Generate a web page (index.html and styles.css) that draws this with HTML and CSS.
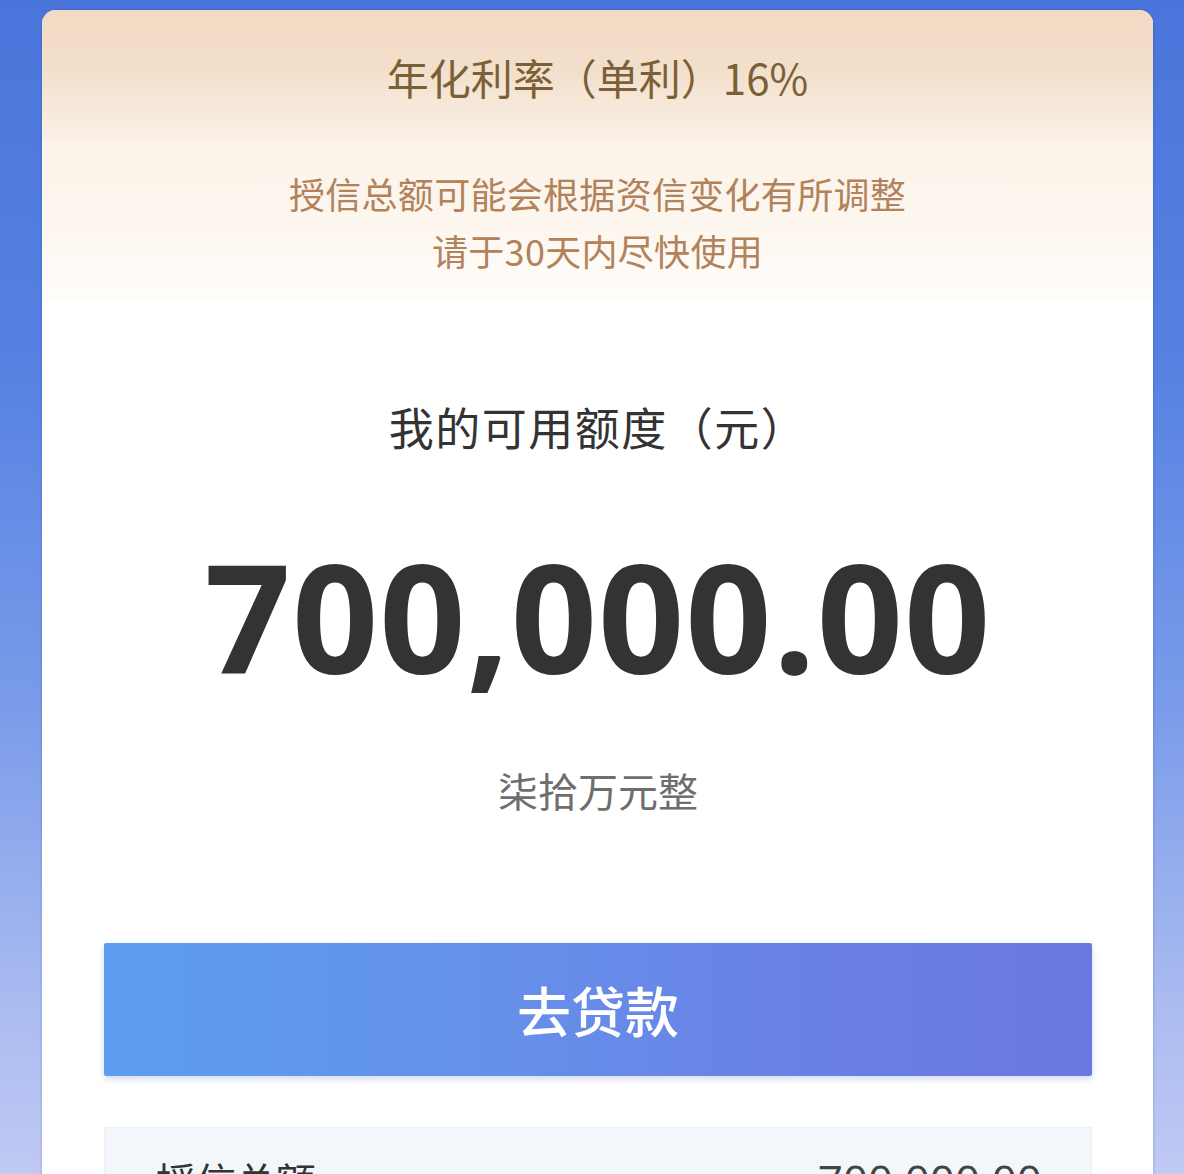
FILE: index.html
```html
<!DOCTYPE html>
<html lang="zh-CN">
<head>
<meta charset="utf-8">
<title>我的可用额度</title>
<link rel="stylesheet" href="styles.css">
</head>
<body>
<div class="page">
  <div class="card">
    <div class="rate-band">
      <div class="rate">年化利率（单利）16%</div>
    </div>
    <div class="notice">
      <div class="notice-line">授信总额可能会根据资信变化有所调整</div>
      <div class="notice-line">请于30天内尽快使用</div>
    </div>
    <div class="quota">
      <div class="quota-title">我的可用额度（元）</div>
      <div class="quota-amount">700,000.00</div>
      <div class="quota-words">柒拾万元整</div>
      <div class="btn">去贷款</div>
      <div class="detail">
        <span class="detail-label">授信总额</span>
        <span class="detail-value">700,000.00</span>
      </div>
    </div>
  </div>
</div>
</body>
</html>
```

FILE: styles.css
```css
html, body {
  margin: 0;
  padding: 0;
}
body {
  width: 1184px;
  height: 1174px;
  overflow: hidden;
  background: linear-gradient(180deg, #4a76db 0%, #5581e2 30%, #7a9bea 60%, #a9bbf0 85%, #c1c9f4 100%);
  font-family: "Noto Sans CJK SC", "Noto Sans", sans-serif;
}
.page {
  padding: 10px 31px 0 42px;
}
.card {
  background: #ffffff;
  border-radius: 14px 14px 0 0;
  height: 1300px;
  overflow: hidden;
  box-shadow: 0 0 3px rgba(40, 60, 140, 0.35);
}
.rate-band {
  height: 130px;
  box-sizing: border-box;
  padding-top: 42px;
  background: linear-gradient(180deg, #f2d9c3 0%, #f2dfcb 45%, #f8ecdf 85%, #fbf1e6 100%);
  text-align: center;
}
.rate {
  font-size: 42px;
  line-height: 50px;
  color: #7b5f37;
}
.notice {
  height: 160px;
  box-sizing: border-box;
  padding-top: 25px;
  background: linear-gradient(180deg, #fcf3e9 0%, #fdf7f0 60%, #fffdfa 100%);
  text-align: center;
}
.notice-line {
  font-size: 36px;
  line-height: 57px;
  letter-spacing: 0.3px;
  color: #b2825a;
}
.quota {
  padding: 0 61px 0 62px;
  text-align: center;
}
.quota-title {
  padding-top: 97px;
  font-size: 45px;
  line-height: 60px;
  letter-spacing: 1.5px;
  color: #333333;
}
.quota-amount {
  margin-top: 83px;
  font-family: "Open Sans", "Noto Sans", sans-serif;
  font-weight: 700;
  font-size: 151px;
  line-height: 152px;
  color: #333333;
  letter-spacing: 1px;
}
.quota-words {
  margin-top: 74px;
  font-size: 40px;
  line-height: 48px;
  color: #6e6e6e;
}
.btn {
  margin-top: 129px;
  height: 133px;
  line-height: 133px;
  background: linear-gradient(90deg, #5c9eee 0%, #6590ea 40%, #6a7fe3 75%, #6b78df 100%);
  color: #ffffff;
  font-size: 54px;
  font-weight: 500;
  border-radius: 2px;
  box-shadow: 0 3px 6px rgba(80, 110, 200, 0.25);
}
.detail {
  margin-top: 51px;
  height: 150px;
  background: linear-gradient(180deg, #f3f6fa 0%, #f4f7fa 100%);
  border: 1px solid #edf0f5;
  display: flex;
  justify-content: space-between;
  align-items: flex-start;
  padding: 26px 49px 0 51px;
  text-align: left;
}
.detail-label {
  font-size: 40px;
  line-height: 52px;
  color: #333333;
}
.detail-value {
  font-family: "Open Sans", "Noto Sans", sans-serif;
  font-size: 44px;
  line-height: 52px;
  color: #444444;
}
```
